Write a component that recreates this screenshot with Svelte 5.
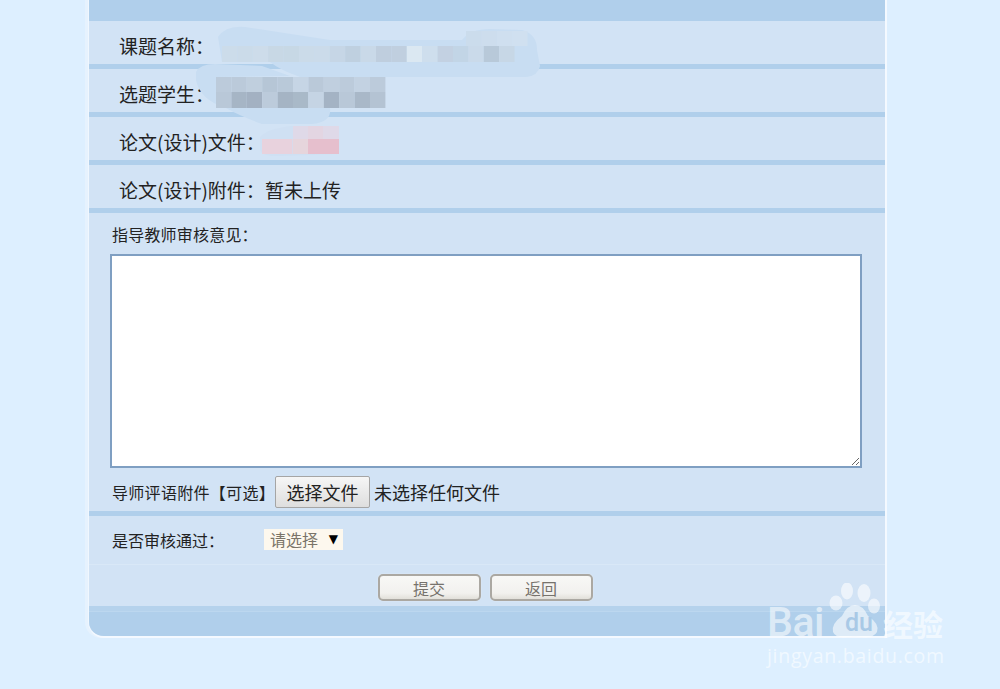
<script>
	// mosaic cells over the redacted values: [x, y, w, h, colour]
	const cellW = 15.4;
	const nameTop = ['#cbdcec', '#cddded', '#cfdfef', '#d0e0f0'];
	const nameBottom = ['#ccdcea', '#cbdbe9', '#cddcea', '#c8d8e5', '#c7d8e5', '#cbdbe9', '#cbdbea', '#c6d6e6', '#bfd0e0', '#c9d9e8', '#bfcede', '#c0cfdf', '#dbe8f2', '#cedeed', '#c3d1e2', '#c2d5e6', '#cadaea', '#b8c9d9', '#c7d7e6'];
	const studentTop = ['#bccbdb', '#bbcada', '#c0cfde', '#b6c6d6', '#b9c9d9', '#c6d5e5', '#bac9d9', '#c0cfdf', '#bccbdb', '#c3d2e2', '#bccbdb'];
	const studentBottom = ['#b9c8d8', '#a6b5c5', '#a3b1c2', '#bccbdb', '#a5b4c4', '#a9b9c8', '#c5d4e4', '#a4b3c4', '#b9c8d8', '#a9b8c8', '#b4c3d3'];

	const cells = [
		...nameBottom.map((c, i) => [222 + i * cellW, 46, cellW, 16, c]),
		...nameTop.map((c, i) => [466 + i * cellW, 31, cellW, 15, c]),
		...studentTop.map((c, i) => [216 + i * cellW, 77, cellW, 15, c]),
		...studentBottom.map((c, i) => [216 + i * cellW, 92, cellW, 16, c]),
		[293, 126, 15.4, 13, '#dfd9e8'],
		[308, 126, 15.4, 13, '#e3d5e2'],
		[323, 126, 16, 13, '#dfd9e8'],
		[262, 139, 15.4, 15, '#e8d2dd'],
		[277, 139, 15.4, 15, '#e8d2dd'],
		[293, 139, 15.4, 15, '#e6d5dc'],
		[308, 139, 15.4, 15, '#e6bfcd'],
		[323, 139, 16, 15, '#e6bfcd']
	];
</script>

<div class="page">
	<div class="panel">
		<div class="top-bar"></div>

		<div class="info-row"><span class="info-label">课题名称：</span></div>
		<div class="info-row"><span class="info-label">选题学生：</span></div>
		<div class="info-row"><span class="info-label">论文(设计)文件：</span></div>
		<div class="info-row"><span class="info-label wide">论文(设计)附件：</span><span>暂未上传</span></div>

		<div class="review">
			<div class="review-label">指导教师审核意见：</div>
			<textarea class="review-text"></textarea>
			<div class="file-row">
				<span class="file-label">导师评语附件【可选】</span>
				<button class="file-btn" type="button">选择文件</button>
				<span class="file-name">未选择任何文件</span>
			</div>
		</div>

		<div class="pass-row">
			<span class="pass-label">是否审核通过：</span>
			<span class="pass-select">
				<select>
					<option>请选择</option>
				</select>
				<span class="pass-arrow">▼</span>
			</span>
		</div>

		<div class="actions">
			<button class="action-btn" type="button">提交</button>
			<button class="action-btn" type="button">返回</button>
		</div>

		<div class="footer-bar"></div>
	</div>

	<!-- painted-over values in the screenshot -->
	<svg class="mask" viewBox="0 0 1000 689" width="1000" height="689">
		<path class="smear" d="M218 37 Q226 25 245 27 L330 40 L462 40 Q470 29 490 29 L522 30 Q537 34 537 50 L540 66 Q538 76 526 77 L300 77 Q280 70 270 62 L222 62 Z" />
		<path class="smear" d="M196 72 Q200 64 215 64 L262 66 L290 76 L216 77 L216 108 L330 108 Q332 122 312 124 L262 124 Q240 116 226 108 Q200 100 196 80 Z" />
		<path class="smear pale" d="M260 137 Q268 128 293 126 L339 126 L339 154 L276 156 Q262 156 260 150 Z" />
		{#each cells as [x, y, w, h, fill]}
			<rect {x} {y} width={w} height={h} {fill} />
		{/each}
	</svg>

	<!-- site watermark -->
	<div class="watermark">
		<div class="wm-main">
			<span class="wm-bai">Bai</span>
			<span class="wm-paw">
				<svg viewBox="0 0 54 56" width="54" height="56">
					<ellipse cx="8" cy="20" rx="6.5" ry="7.5" />
					<ellipse cx="19" cy="8" rx="6" ry="8.5" />
					<ellipse cx="36" cy="10" rx="6.5" ry="9" />
					<ellipse cx="46" cy="23" rx="6" ry="7.5" />
					<path d="M27 22 Q35 22 40 33 Q52 41 49 49 Q45 56 32 54 Q27 53 21 54 Q8 56 5 49 Q3 41 14 33 Q19 22 27 22 Z" />
				</svg>
				<span class="wm-du">du</span>
			</span>
			<span class="wm-cn">经验</span>
		</div>
		<div class="wm-url">jingyan.baidu.com</div>
	</div>
</div>

<style>
	:global(body) {
		margin: 0;
		background: #ddefff;
	}

	.page {
		position: relative;
		width: 1000px;
		height: 689px;
		overflow: hidden;
		font-family: "Noto Sans CJK SC", "Liberation Sans", sans-serif;
		color: #222;
	}

	.panel {
		box-sizing: content-box;
		width: 796px;
		margin-left: 88px;
		border-left: 1px solid #f0f7fe;
		border-right: 2px solid #f4f9ff;
		border-bottom: 2px solid #f4f9ff;
		border-bottom-left-radius: 16px;
		box-shadow: -3px 0 0 #e6f2fe;
		background: #d2e3f5;
		overflow: hidden;
	}

	.top-bar {
		height: 21px;
		background: #b0cfeb;
	}

	.info-row {
		box-sizing: border-box;
		display: flex;
		align-items: center;
		height: 48px;
		padding: 5px 0 0 30px;
		border-bottom: 5px solid #b0cfeb;
		font-size: 19px;
	}

	.info-label {
		white-space: nowrap;
	}

	.info-label.wide {
		width: 146px;
	}

	.review {
		box-sizing: border-box;
		height: 303px;
		padding: 10px 0 0 21px;
		border-bottom: 5px solid #b0cfeb;
	}

	.review-label {
		height: 31px;
		padding-left: 2px;
		font-size: 16px;
		line-height: 23px;
		letter-spacing: 0.2px;
	}

	.review-text {
		box-sizing: border-box;
		display: block;
		width: 752px;
		height: 214px;
		margin: 0;
		border: 2px solid #7f9fc2;
		background: #fff;
	}

	.file-row {
		display: flex;
		align-items: center;
		height: 32px;
		margin-top: 8px;
		padding-left: 2px;
	}

	.file-label {
		width: 163px;
		font-size: 16px;
		letter-spacing: 0.3px;
		white-space: nowrap;
		text-spacing-trim: space-all;
	}

	.file-btn {
		width: 95px;
		height: 32px;
		padding: 0;
		border: 1px solid #a5a5a5;
		border-radius: 2px;
		background: linear-gradient(#f6f6f6, #dedede);
		font: inherit;
		font-size: 18px;
		color: #222;
	}

	.file-name {
		margin-left: 4px;
		font-size: 18px;
	}

	.pass-row {
		box-sizing: border-box;
		display: flex;
		align-items: center;
		height: 49px;
		padding: 0 0 1px 23px;
		border-bottom: 1px solid #d9e8f7;
	}

	.pass-label {
		width: 152px;
		font-size: 16px;
	}

	.pass-select {
		position: relative;
		display: block;
		height: 21px;
	}

	.pass-select select {
		display: block;
		appearance: none;
		width: 79px;
		height: 21px;
		padding: 0 0 0 6px;
		border: 0;
		border-radius: 0;
		background: #fdf8ee;
		font: inherit;
		font-size: 16px;
		line-height: 21px;
		color: #7a7468;
	}

	.pass-arrow {
		position: absolute;
		top: 1px;
		right: 5px;
		font-family: "DejaVu Sans", sans-serif;
		font-size: 12px;
		line-height: 18px;
		color: #000;
	}

	.actions {
		display: flex;
		justify-content: center;
		gap: 9px;
		box-sizing: border-box;
		height: 41px;
		padding: 9px 4px 0 0;
	}

	.action-btn {
		box-sizing: border-box;
		width: 103px;
		height: 27px;
		padding: 0;
		border: 2px solid #aba8a2;
		border-radius: 5px;
		background: linear-gradient(#f8f8f6, #f2f1ee 75%, #e2e0da);
		box-shadow: 0 0 1px #fff;
		font: inherit;
		font-size: 16px;
		color: #76726c;
	}

	.footer-bar {
		height: 30px;
		background: linear-gradient(#b5d2ec 0 5px, #bcd7ef 5px 6px, #b0cfeb 6px);
	}

	.mask {
		position: absolute;
		top: 0;
		left: 0;
		filter: blur(0.4px);
	}

	.smear {
		fill: #c8ddf2;
	}

	.smear.pale {
		fill: #cfe0f3;
	}

	.watermark {
		position: absolute;
		left: 767px;
		top: 583px;
		width: 180px;
		color: rgba(255, 255, 255, 0.58);
		font-family: "Roboto", sans-serif;
	}

	.wm-main {
		position: relative;
		height: 60px;
	}

	.wm-bai {
		position: absolute;
		left: 0;
		top: 16px;
		font-size: 41px;
		font-weight: 500;
		letter-spacing: -0.5px;
		line-height: 46px;
	}

	.wm-paw {
		position: absolute;
		left: 61px;
		top: 0;
		width: 54px;
		height: 56px;
	}

	.wm-paw svg {
		display: block;
		fill: rgba(255, 255, 255, 0.58);
	}

	.wm-du {
		position: absolute;
		left: 17px;
		top: 26px;
		font-size: 25px;
		font-weight: 500;
		line-height: 28px;
		color: #a9c9e6;
	}

	.wm-cn {
		position: absolute;
		left: 116px;
		top: 18px;
		font-family: "Noto Sans CJK SC", sans-serif;
		font-size: 30px;
		font-weight: 700;
		line-height: 44px;
		white-space: nowrap;
	}

	.wm-url {
		font-family: "Open Sans", sans-serif;
		font-size: 19.5px;
		line-height: 26px;
		letter-spacing: 0.7px;
		white-space: nowrap;
	}
</style>
